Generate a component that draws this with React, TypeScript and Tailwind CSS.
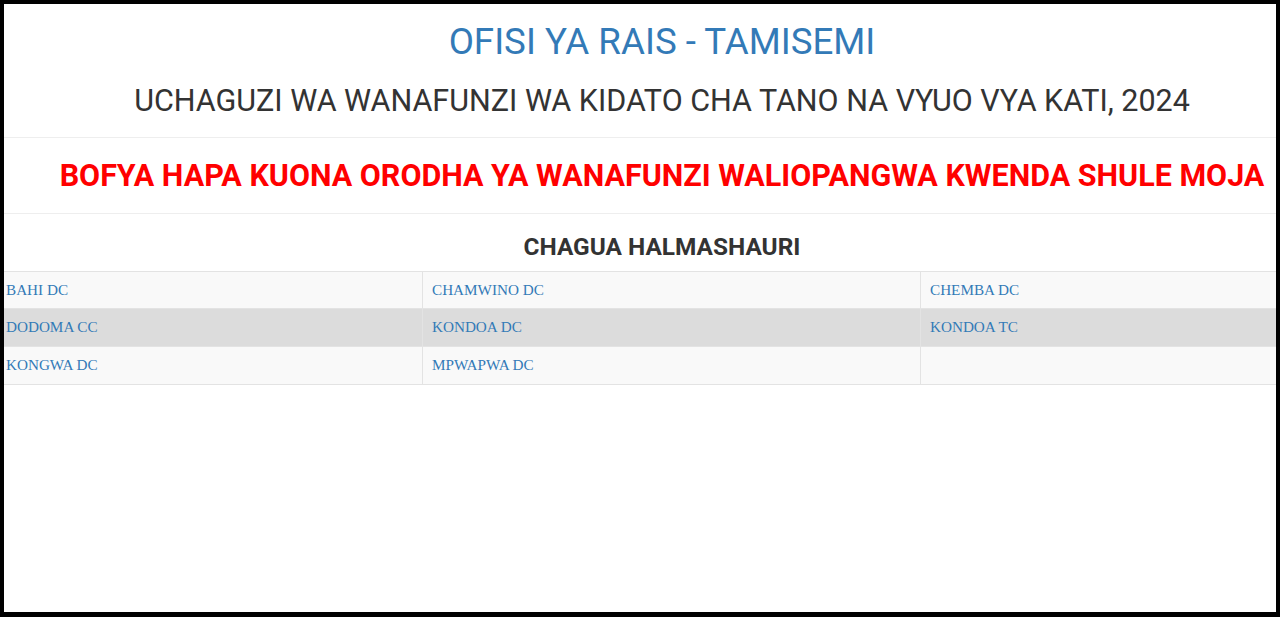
import React from "react";

const rows: [string, string, string][] = [
  ["BAHI DC", "CHAMWINO DC", "CHEMBA DC"],
  ["DODOMA CC", "KONDOA DC", "KONDOA TC"],
  ["KONGWA DC", "MPWAPWA DC", ""],
];

const heights = ["h-[36px]", "h-[37px]", "h-[37px]"];

export default function App() {
  return (
    <div className="w-[1280px] h-[617px] bg-black border-t-4 border-l-4 border-r-4 border-b-[5px] border-black overflow-hidden">
      <div className="w-full h-full bg-white overflow-hidden">
        <div className="h-[133px] pl-[44px] text-center whitespace-nowrap" style={{ fontFamily: "Roboto, 'Noto Sans', sans-serif" }}>
          <h1 className="pt-[18px] text-[36.7px] leading-[40px] text-[#337ab7]">OFISI YA RAIS - TAMISEMI</h1>
          <h2 className="mt-[21px] text-[30.5px] leading-[36px] text-[#333333]">
            UCHAGUZI WA WANAFUNZI WA KIDATO CHA TANO NA VYUO VYA KATI, 2024
          </h2>
        </div>
        <div className="h-px bg-[#eeeeee]" />
        <div className="h-[75px] pt-[21px] pl-[44px] text-center whitespace-nowrap" style={{ fontFamily: "Roboto, 'Noto Sans', sans-serif" }}>
          <a className="text-[30.5px] leading-[34px] font-bold text-[#ff0000]">
            BOFYA HAPA KUONA ORODHA YA WANAFUNZI WALIOPANGWA KWENDA SHULE MOJA
          </a>
        </div>
        <div className="h-px bg-[#eeeeee]" />
        <div className="h-[57px] pt-[18px] pl-[44px] text-center" style={{ fontFamily: "Roboto, 'Noto Sans', sans-serif" }}>
          <h3 className="text-[24.4px] leading-[30px] font-bold text-[#333333]">CHAGUA HALMASHAURI</h3>
        </div>
        <div className="border-t border-[#e3e3e3]" style={{ fontFamily: "'Liberation Serif', 'Times New Roman', serif" }}>
          {rows.map((r, i) => (
            <div
              key={i}
              className={`grid grid-cols-[418px_498px_1fr] border-b border-[#e3e3e3] ${i === 1 ? "bg-[#dcdcdc]" : "bg-[#f9f9f9]"}`}
            >
              <div className={`${heights[i]} flex items-center pl-[2px] text-[15.2px] text-[#337ab7]`}>{r[0]}</div>
              <div className={`${heights[i]} flex items-center pl-[9px] border-l border-[#e3e3e3] text-[15.2px] text-[#337ab7]`}>{r[1]}</div>
              <div className={`${heights[i]} flex items-center pl-[9px] border-l border-[#e3e3e3] text-[15.2px] text-[#337ab7]`}>{r[2]}</div>
            </div>
          ))}
        </div>
      </div>
    </div>
  );
}
